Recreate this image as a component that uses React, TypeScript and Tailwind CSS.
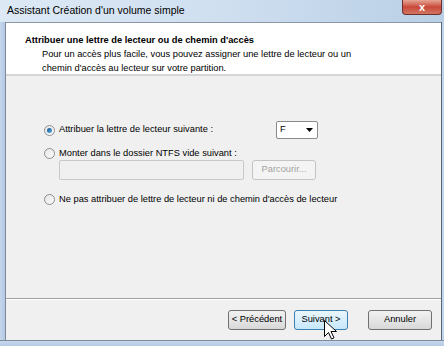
import React from 'react';

const font = { fontFamily: '"Liberation Sans", Arial, sans-serif' };

const Radio: React.FC<{ checked?: boolean }> = ({ checked = false }) => (
    <span className="relative flex h-[11px] w-[11px] shrink-0 items-center justify-center rounded-full border border-[#8f8f8f] bg-gradient-to-br from-[#e6e6e6] to-[#fbfbfb]">
        {checked && (
            <span className="h-[5px] w-[5px] rounded-full bg-gradient-to-br from-[#0b4d8c] to-[#5fb3e6]" />
        )}
    </span>
);

const Button: React.FC<{ label: string; width: string; focused?: boolean; disabled?: boolean }> = ({
    label,
    width,
    focused = false,
    disabled = false,
}) => {
    const skin = disabled
        ? 'border-[#c4c4c4] bg-[#f4f4f4] text-[#a3a3a3]'
        : focused
        ? 'border-[#3c7fb1] bg-gradient-to-b from-[#eaf6fd] to-[#c6e8fb] text-black'
        : 'border-[#707070] bg-gradient-to-b from-[#f2f2f2] to-[#d8d8d8] text-black';
    return (
        <div
            className={`flex h-[20px] items-center justify-center rounded-[3px] border text-[9.3px] ${skin} ${width}`}
        >
            {label}
        </div>
    );
};

export default function App() {
    return (
        <div
            className="flex h-[346px] w-[444px] flex-col overflow-hidden bg-gradient-to-b from-[#d9e6f4] to-[#c2d6ec]"
            style={font}
        >
            {/* barre de titre */}
            <div className="relative flex h-[22px] shrink-0 items-center bg-gradient-to-r from-[#dde9f5] via-[#cfdff0] to-[#b9cfe6] pl-[7px]">
                <span className="text-[10.5px] text-black">Assistant Création d'un volume simple</span>
                <div className="absolute right-[2px] top-0 flex h-[15px] w-[40px] items-center justify-center rounded-b-[4px] border border-t-0 border-[#6d2f2a] bg-gradient-to-b from-[#e5a595] via-[#c9483a] to-[#d27562]">
                    <span className="text-[11px] font-bold leading-none text-white">x</span>
                </div>
            </div>

            <div className="flex min-h-0 flex-1">
                <div className="w-[6px] shrink-0 border-r border-[#7c8a9c] bg-gradient-to-r from-[#c5d7ec] to-[#b4c9e2]" />

                {/* zone client */}
                <div className="flex min-w-0 flex-1 flex-col border-t border-[#8b96a4] bg-[#f0f0f0]">
                    <div className="h-[53px] shrink-0 border-b-2 border-[#d5d5d5] bg-white">
                        <div className="pl-[19px] pt-[10px] text-[9.3px] font-bold leading-[14px] text-black">
                            Attribuer une lettre de lecteur ou de chemin d'accès
                        </div>
                        <div className="pl-[36px] text-[9.3px] leading-[14px] text-black">
                            Pour un accès plus facile, vous pouvez assigner une lettre de lecteur ou un
                            <br />
                            chemin d'accès au lecteur sur votre partition.
                        </div>
                    </div>

                    <div className="flex flex-1 flex-col pl-[38px] pt-[45px] text-[9.3px] text-black">
                        <div className="flex h-[18px] items-center">
                            <div className="flex w-[232px] items-center gap-[4px]">
                                <Radio checked />
                                <span>Attribuer la lettre de lecteur suivante :</span>
                            </div>
                            <div className="flex h-[18px] w-[42px] items-center justify-between rounded-[2px] border border-[#8a8a8a] bg-white pl-[3px] pr-[4px]">
                                <span>F</span>
                                <svg width="7" height="4" viewBox="0 0 7 4">
                                    <path d="M0 0h7L3.5 4z" fill="#000" />
                                </svg>
                            </div>
                        </div>

                        <div className="mt-[8px] flex h-[13px] items-center gap-[4px]">
                            <Radio />
                            <span>Monter dans le dossier NTFS vide suivant :</span>
                        </div>

                        <div className="flex h-[20px] items-center pl-[15px]">
                            <div className="h-[20px] w-[185px] rounded-[2px] border border-[#c9c9c9] bg-[#f0f0f0]" />
                            <div className="ml-[8px]">
                                <Button label="Parcourir..." width="w-[64px]" disabled />
                            </div>
                        </div>

                        <div className="mt-[13px] flex h-[13px] items-center gap-[4px]">
                            <Radio />
                            <span>Ne pas attribuer de lettre de lecteur ni de chemin d'accès de lecteur</span>
                        </div>
                    </div>

                    <div className="relative flex h-[42px] shrink-0 items-start justify-end border-t border-[#a0a0a0] pr-[9px] pt-[11px] shadow-[inset_0_1px_0_#ffffff]">
                        <Button label="< Précédent" width="w-[58px]" />
                        <div className="ml-[8px]">
                            <Button label="Suivant >" width="w-[54px]" focused />
                        </div>
                        <div className="ml-[20px]">
                            <Button label="Annuler" width="w-[64px]" />
                        </div>
                        <svg
                            className="absolute left-[318px] top-[21px]"
                            width="13"
                            height="20"
                            viewBox="0 0 13 20"
                        >
                            <path
                                d="M0.5 0.5v16l4-4 3 6.5 2.5-1.2-3-6.3h5.5z"
                                fill="#fff"
                                stroke="#000"
                                strokeWidth="1"
                                strokeLinejoin="round"
                            />
                        </svg>
                    </div>
                </div>

                <div className="w-[3px] shrink-0 border-l border-[#5b6675] bg-[#c2d4ea]" />
            </div>

            <div className="h-[6px] shrink-0 border-t border-[#7c8a9c] bg-gradient-to-b from-[#c6d8ed] to-[#b4cae3]" />
        </div>
    );
}
